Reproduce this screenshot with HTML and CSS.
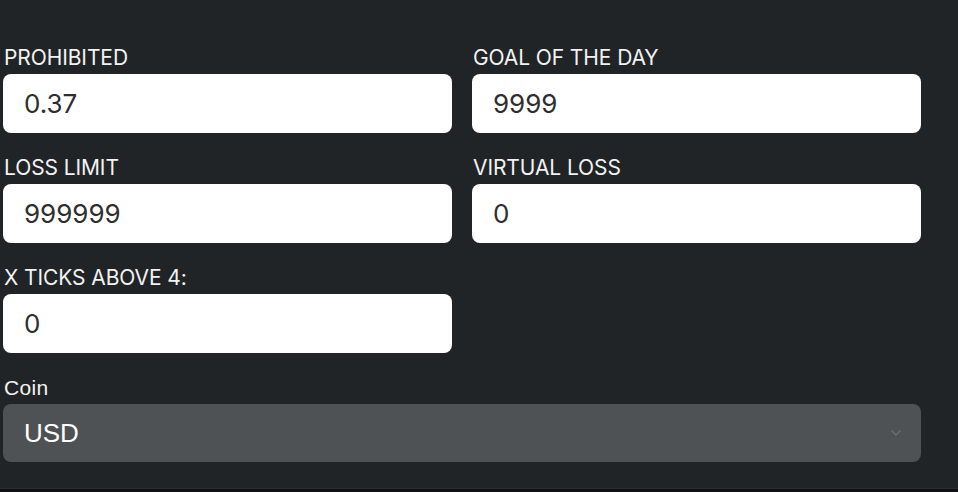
FILE: index.html
```html
<!DOCTYPE html>
<html lang="en">
<head>
  <meta charset="UTF-8">
  <title>Settings</title>
  <meta name="viewport" content="width=device-width, initial-scale=1.0">
  <link rel="stylesheet" href="styles.css">
</head>
<body>
  <div class="settings">
    <div class="grid">
      <div class="field">
        <label>PROHIBITED</label>
        <input class="box" type="text" value="0.37">
      </div>
      <div class="field">
        <label>GOAL OF THE DAY</label>
        <input class="box" type="text" value="9999">
      </div>
      <div class="field">
        <label>LOSS LIMIT</label>
        <input class="box" type="text" value="999999">
      </div>
      <div class="field">
        <label>VIRTUAL LOSS</label>
        <input class="box" type="text" value="0">
      </div>
      <div class="field">
        <label>X TICKS ABOVE 4:</label>
        <input class="box" type="text" value="0">
      </div>
    </div>

    <!-- moeda -->
    <div class="coin">
      <label>Coin</label>
      <div class="select">
        <span>USD</span>
        <svg width="12" height="8" viewBox="0 0 12 8"><path d="M1.5 1.5 L6 6 L10.5 1.5" fill="none" stroke="#6a6f73" stroke-width="1.4"/></svg>
      </div>
    </div>
  </div>
  <div class="bottom-line"></div>
</body>
</html>
```

FILE: styles.css
```css
body {
  margin: 0; padding: 0;
  background-color: #212427;
  font-family: Inter, "Open Sans", sans-serif;
  height: 492px;
  overflow: hidden;
  display: flex;
  flex-direction: column;
}
.settings {
  flex: 1;
  padding: 46px 0 0 3px;
  width: 918px;
}
.grid {
  display: grid;
  grid-template-columns: 449px 449px;
  column-gap: 20px;
  row-gap: 23px;
}
.field label {
  display: block;
  color: #f2f2f2;
  font-size: 21px;
  line-height: 22px;
  letter-spacing: -0.1px;
  padding: 1px 0 0 1px;
  margin-bottom: 5px;
}
.box {
  display: block;
  box-sizing: border-box;
  width: 100%;
  height: 59px;
  border: none;
  border-radius: 8px;
  background: #fff;
  padding: 0 0 0 21px;
  font-family: Inter, "Open Sans", sans-serif;
  font-size: 26px;
  color: #2e2e2e;
  outline: none;
}

.coin {
  margin-top: 23px;
}
.coin label {
  display: block;
  color: #f2f2f2;
  font-family: "Liberation Sans", Arial, sans-serif;
  font-size: 21px;
  line-height: 22px;
  letter-spacing: 0.3px;
  padding: 1px 0 0 1px;
  margin-bottom: 5px;
}
.select {
  box-sizing: border-box;
  height: 58px;
  border-radius: 8px;
  background-color: #4e5255;
  display: flex;
  align-items: center;
  justify-content: space-between;
  padding: 0 19px 0 21px;
  font-family: "Liberation Sans", Arial, sans-serif;
  font-size: 26px;
  color: #fff;
}
.bottom-line {
  height: 3px;
  border-top: 1px solid #2b2f32;
  background: #0e1011;
}
```
